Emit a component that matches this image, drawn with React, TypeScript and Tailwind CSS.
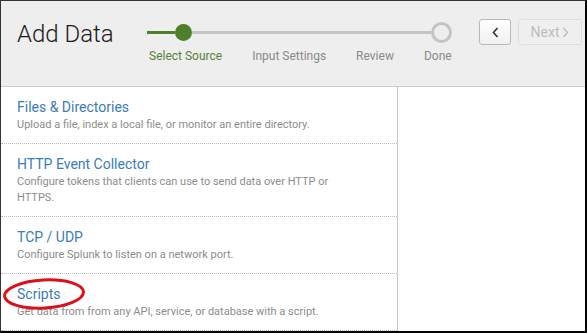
import React from 'react';

const sources = [
  { title: 'Files & Directories', desc: 'Upload a file, index a local file, or monitor an entire directory.' },
  { title: 'HTTP Event Collector', desc: 'Configure tokens that clients can use to send data over HTTP or HTTPS.' },
  { title: 'TCP / UDP', desc: 'Configure Splunk to listen on a network port.' },
  { title: 'Scripts', desc: 'Get data from from any API, service, or database with a script.' },
];

const steps = ['Select Source', 'Input Settings', 'Review', 'Done'];

export default function App() {
  return (
    <div
      className="w-[587px] h-[333px] flex flex-col overflow-hidden bg-white border-t border-l border-[#333] border-r-2 border-b-2 border-r-black border-b-black"
      style={{ fontFamily: 'Roboto, "Liberation Sans", sans-serif' }}
    >
      {/* Header */}
      <div className="h-[86px] shrink-0 flex bg-[#eeeeee] border-b border-[#cccccc]">
        <h1 className="w-[146px] shrink-0 pl-[16px] mt-[18px] text-[24px] leading-[30px] font-light text-[#1a1a1a] whitespace-nowrap">
          Add Data
        </h1>

        {/* Stepper */}
        <div className="mt-[21px] flex flex-col w-[305px] shrink-0">
          <div className="flex items-center h-[20px]">
            <div className="w-[28px] h-[3px] bg-[#4f7f2a]" />
            <div className="w-[17px] h-[17px] rounded-full bg-[#4f7f2a] shrink-0" />
            <div className="flex-1 h-[3px] bg-[#c4c4c4]" />
            <div className="w-[21px] h-[21px] rounded-full border-[3px] border-[#c4c4c4] bg-[#eeeeee] shrink-0" />
          </div>
          <div className="flex gap-[30px] ml-[2px] mt-[6px] text-[12px] leading-[16px] whitespace-nowrap">
            {steps.map((s, i) => (
              <span key={s} className={i === 0 ? 'text-[#5a7f3a]' : 'text-[#8a8a8a]'}>
                {s}
              </span>
            ))}
          </div>
        </div>

        {/* Nav buttons */}
        <div className="ml-auto mr-[3px] mt-[18px] flex gap-[7px] h-[26px]">
          <button className="w-[32px] h-[26px] flex items-center justify-center rounded-[3px] border border-[#b8b8b8] bg-gradient-to-b from-white to-[#f0f0f0]">
            <svg width="7" height="11" viewBox="0 0 7 11" fill="none" stroke="#333" strokeWidth="1.6">
              <polyline points="5.5,1 1.5,5.5 5.5,10" />
            </svg>
          </button>
          <button className="w-[64px] h-[26px] flex items-center justify-center gap-[3px] rounded-[3px] border border-[#dddddd] bg-[#efefef] text-[14px] text-[#bdbdbd]">
            Next
            <svg width="7" height="11" viewBox="0 0 7 11" fill="none" stroke="#bdbdbd" strokeWidth="1.4">
              <polyline points="1.5,1 5.5,5.5 1.5,10" />
            </svg>
          </button>
        </div>
      </div>

      {/* Body */}
      <div className="flex flex-1">
        <div className="w-[396px] shrink-0 flex flex-col">
          {sources.map((s) => (
            <div key={s.title} className="relative pl-[16px] pr-[40px] pt-[11px] pb-[10px] border-b border-dotted border-[#bbbbbb]">
              <div className="text-[14px] leading-[19px] text-[#3a7db5]">{s.title}</div>
              <div className="text-[11px] leading-[16px] text-[#8c8c8c]">{s.desc}</div>
              {s.title === 'Scripts' && (
                <svg className="absolute left-[1px] top-[2px]" width="86" height="36" viewBox="0 0 86 36" fill="none">
                  <ellipse cx="42" cy="18" rx="39.5" ry="14" stroke="#dc0f1b" strokeWidth="3" transform="rotate(-3 42 18)" />
                </svg>
              )}
            </div>
          ))}
        </div>
        <div className="flex-1 border-l border-[#c8c8c8] bg-white" />
      </div>
    </div>
  );
}
